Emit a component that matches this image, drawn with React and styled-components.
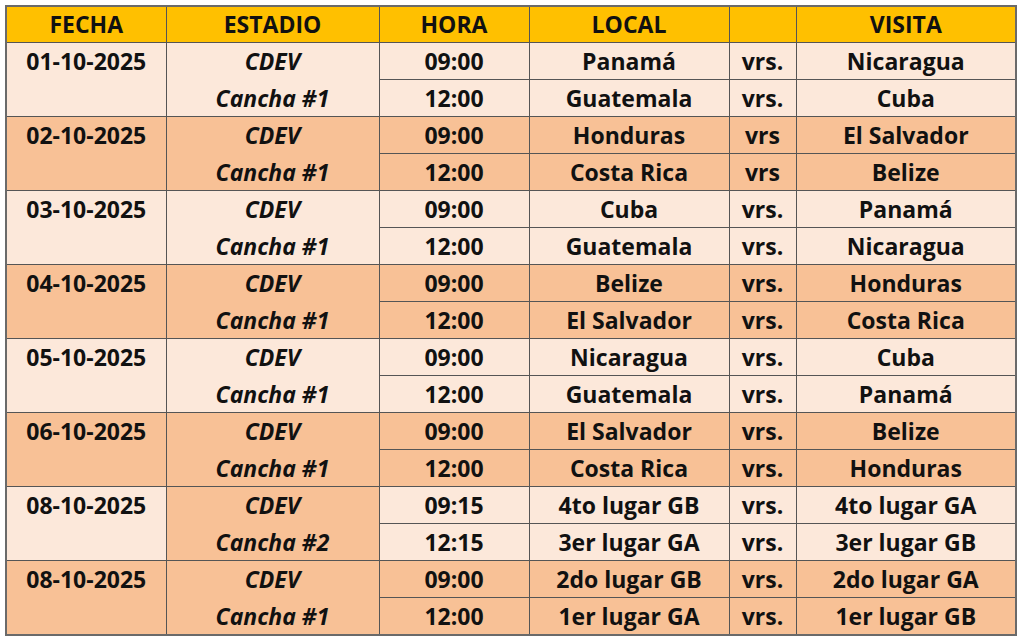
import React from "react";
import styled, { createGlobalStyle } from "styled-components";

const GlobalStyle = createGlobalStyle`
  body {
    margin: 0;
    padding: 5px 0 0 5px;
    background: #ffffff;
    font-family: "Open Sans", "Lato", sans-serif;
  }
`;

const LIGHT = "#fce8da";
const DARK = "#f8c196";

const Table = styled.table`
  width: 1010px;
  table-layout: fixed;
  border-collapse: collapse;
  border: 2px solid #6a6a6a;
  font-weight: 700;
  font-size: 23px;
  color: #111;
`;

const Col = styled.col`
  width: ${(p) => p.w}px;
`;

const HeadCell = styled.th`
  height: 35px;
  padding: 0;
  background: #ffc000;
  border: 1px solid #555;
  text-align: center;
  font-weight: 700;
  line-height: 35px;
`;

const Cell = styled.td`
  height: 36px;
  padding: 0;
  text-align: center;
  vertical-align: ${(p) => (p.top ? "top" : "middle")};
  background: ${(p) => (p.dark ? DARK : LIGHT)};
  border: 1px solid #555;
  line-height: 36px;
  font-style: ${(p) => (p.italic ? "italic" : "normal")};
`;

const Line = styled.div`
  height: 36px;
  line-height: 36px;
  & + & {
    margin-top: 1px;
  }
`;

const groups = [
  { date: "01-10-2025", dark: false, field: "Cancha #1", vs: "vrs.",
    games: [["09:00", "Panamá", "Nicaragua"], ["12:00", "Guatemala", "Cuba"]] },
  { date: "02-10-2025", dark: true, field: "Cancha #1", vs: "vrs",
    games: [["09:00", "Honduras", "El Salvador"], ["12:00", "Costa Rica", "Belize"]] },
  { date: "03-10-2025", dark: false, field: "Cancha #1", vs: "vrs.",
    games: [["09:00", "Cuba", "Panamá"], ["12:00", "Guatemala", "Nicaragua"]] },
  { date: "04-10-2025", dark: true, field: "Cancha #1", vs: "vrs.",
    games: [["09:00", "Belize", "Honduras"], ["12:00", "El Salvador", "Costa Rica"]] },
  { date: "05-10-2025", dark: false, field: "Cancha #1", vs: "vrs.",
    games: [["09:00", "Nicaragua", "Cuba"], ["12:00", "Guatemala", "Panamá"]] },
  { date: "06-10-2025", dark: true, field: "Cancha #1", vs: "vrs.",
    games: [["09:00", "El Salvador", "Belize"], ["12:00", "Costa Rica", "Honduras"]] },
  { date: "08-10-2025", dark: false, stadiumDark: true, field: "Cancha #2", vs: "vrs.",
    games: [["09:15", "4to lugar GB", "4to lugar GA"], ["12:15", "3er lugar GA", "3er lugar GB"]] },
  { date: "08-10-2025", dark: true, field: "Cancha #1", vs: "vrs.",
    games: [["09:00", "2do lugar GB", "2do lugar GA"], ["12:00", "1er lugar GA", "1er lugar GB"]] },
];

export default function App() {
  return (
    <>
      <GlobalStyle />
      <Table>
        <colgroup>
          <Col w={160} />
          <Col w={213} />
          <Col w={150} />
          <Col w={200} />
          <Col w={67} />
          <Col w={220} />
        </colgroup>
        <thead>
          <tr>
            <HeadCell>FECHA</HeadCell>
            <HeadCell>ESTADIO</HeadCell>
            <HeadCell>HORA</HeadCell>
            <HeadCell>LOCAL</HeadCell>
            <HeadCell />
            <HeadCell>VISITA</HeadCell>
          </tr>
        </thead>
        <tbody>
          {groups.map((g, i) =>
            g.games.map(([time, home, away], j) => (
              <tr key={`${i}-${j}`}>
                {j === 0 && (
                  <>
                    <Cell rowSpan={2} top dark={g.dark}>
                      <Line>{g.date}</Line>
                    </Cell>
                    <Cell rowSpan={2} top italic dark={g.stadiumDark || g.dark}>
                      <Line>CDEV</Line>
                      <Line>{g.field}</Line>
                    </Cell>
                  </>
                )}
                <Cell dark={g.dark}>{time}</Cell>
                <Cell dark={g.dark}>{home}</Cell>
                <Cell dark={g.dark}>{g.vs}</Cell>
                <Cell dark={g.dark}>{away}</Cell>
              </tr>
            ))
          )}
        </tbody>
      </Table>
    </>
  );
}
